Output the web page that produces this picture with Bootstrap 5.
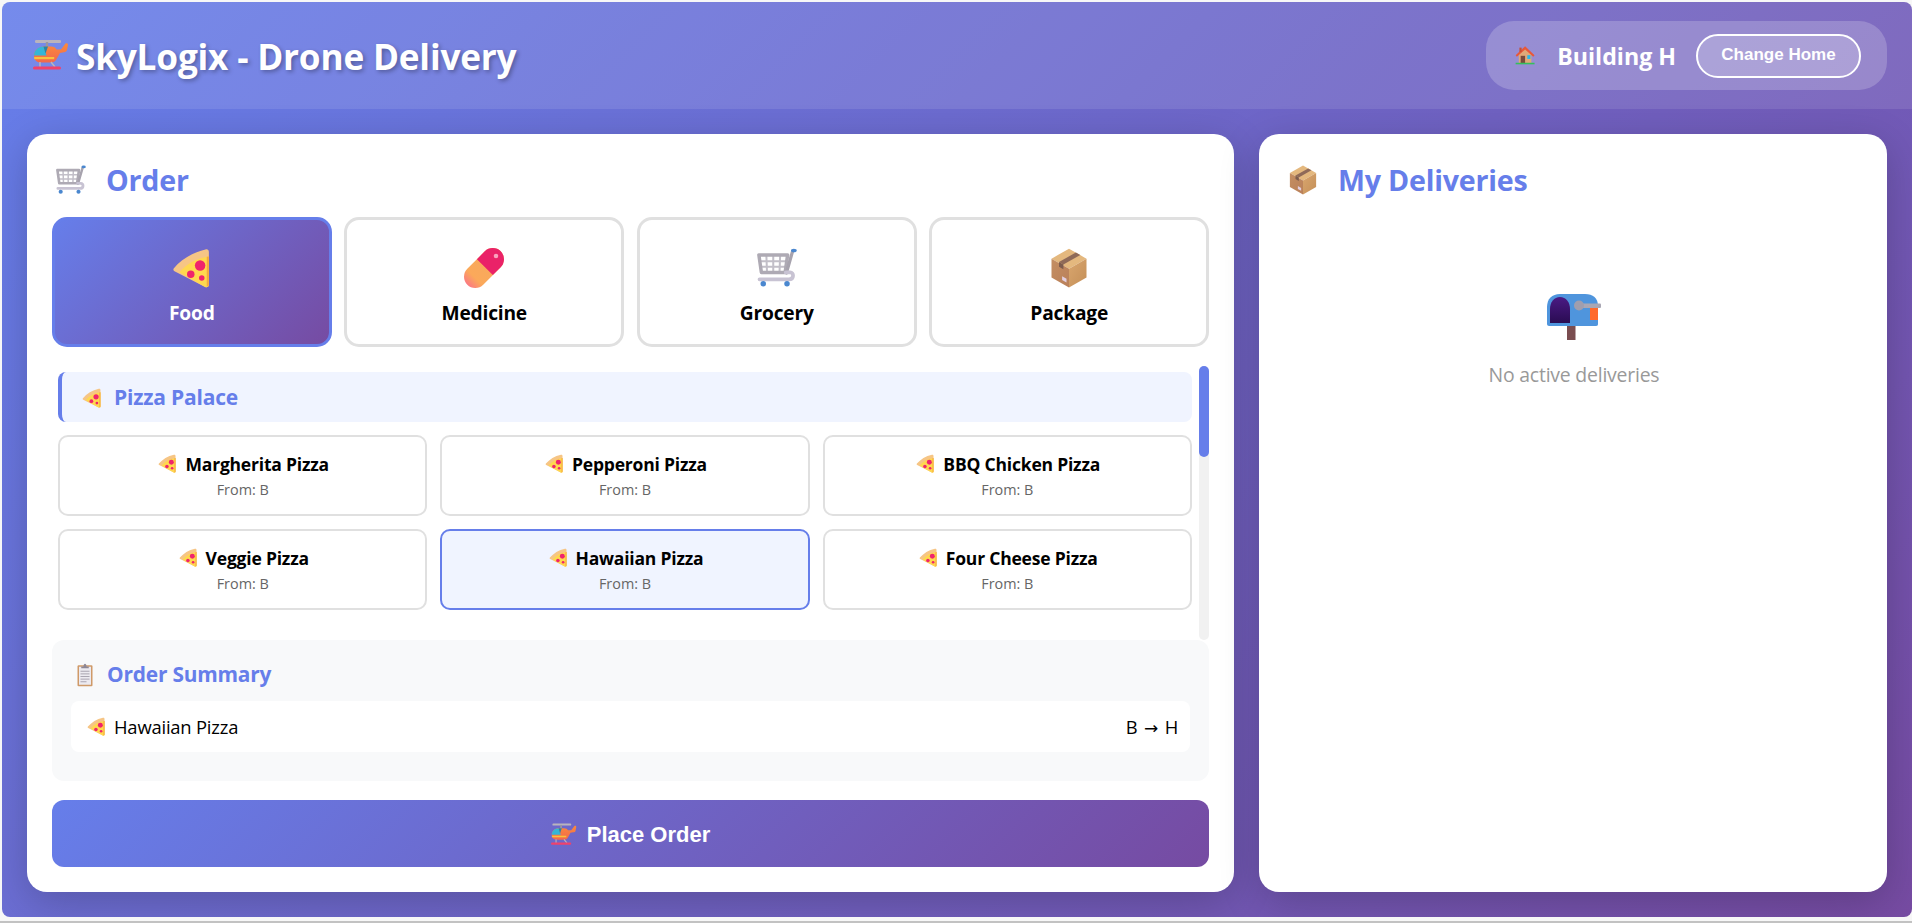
<!DOCTYPE html>
<html lang="en">
<head>
<meta charset="utf-8">
<title>SkyLogix - Drone Delivery</title>
<link href="https://cdn.jsdelivr.net/npm/bootstrap@5.3.0/dist/css/bootstrap.min.css" rel="stylesheet">
<style>
html,body{height:923px;overflow:hidden}
body{background:#f7f7f7;font-family:"Open Sans","Noto Sans",sans-serif;color:#000;padding:2px 0 0 2px;border-bottom:2px solid #c2c2c2}
.sky-app{height:915px;border-radius:8px;overflow:hidden;background:linear-gradient(135deg,#667eea 0%,#764ba2 100%)}
.sky-head{height:107px;padding:0 25px 0 31px;background:rgba(255,255,255,.1);flex:none}
.sky-brand{font-size:35.2px;font-weight:700;color:#fff;text-shadow:2px 2px 4px rgba(0,0,0,.3);letter-spacing:-.2px;gap:7px;padding-top:2px}
.sky-pill{height:69px;width:401px;padding:0 26px 0 29px;background:rgba(255,255,255,.2);border-radius:28px}
.sky-pilltext{font-size:23.2px;font-weight:700;color:#fff;margin:2px 20px 0 22px;white-space:nowrap}
.sky-change{height:44px;width:165px;flex:none;border:2px solid #fff;border-radius:25px;background:rgba(255,255,255,.2);color:#fff;font:700 17px "Liberation Sans",sans-serif;padding:0 0 1px}
.sky-change:hover{background:rgba(255,255,255,.3);color:#fff;border-color:#fff}
.sky-main{flex:1;min-height:0;padding:25px;display:grid;grid-template-columns:1207px 628px;column-gap:25px}
.sky-panel{border:0;border-radius:20px;background:#fff;box-shadow:0 10px 40px rgba(0,0,0,.2);padding:25px;min-height:0}
.sky-panel>*{flex-shrink:0}
.sky-title{font-size:28.6px;font-weight:700;color:#667eea;margin:0 0 16px;height:42px;line-height:42px;letter-spacing:-.2px;gap:20px}
.sky-cats{display:grid;grid-template-columns:repeat(4,1fr);column-gap:12.8px;height:130px}
.sky-cat{border:3px solid #e0e0e0;border-radius:15px;background:#fff;font-size:19.2px;font-weight:700;color:#000;padding:0;letter-spacing:-.2px}
.sky-cat svg{margin-top:28px;margin-bottom:11px}
.sky-cat-on{background:linear-gradient(135deg,#667eea 0%,#764ba2 100%);border-color:#667eea;color:#fff}
.sky-listwrap{height:274px;margin-top:19px}
.sky-list{padding:6px 7px 0 6px}
.sky-rest{height:50px;background:#f0f4ff;border-left:4px solid #667eea;border-radius:8px;padding:1px 0 0 20px;font-size:21px;font-weight:700;color:#667eea;letter-spacing:-.2px;gap:12px;margin-bottom:13px}
.sky-items{display:grid;grid-template-columns:repeat(3,1fr);gap:13px 12.8px}
.sky-item{height:81px;border:2px solid #e0e0e0;border-radius:10px;background:#fff;padding:0}
.sky-item-on{border-color:#667eea;background:#f0f4ff}
.sky-name{font-size:17.5px;font-weight:700;color:#000;gap:8px;line-height:22px;letter-spacing:-.2px;padding-left:2px}
.sky-from{font-size:14.4px;color:#666;line-height:18px;margin-top:6px}
.sky-track{width:10px;background:#f1f1f1;border-radius:5px}
.sky-thumb{height:91px;background:#667eea;border-radius:5px}
.sky-summary{height:141px;background:#f8f9fa;border-radius:12px;padding:20px 19px 0}
.sky-sumtitle{font-size:20.9px;font-weight:700;color:#667eea;gap:13px;height:30px;margin-bottom:11px;padding-left:5px;letter-spacing:-.2px}
.sky-sumrow{height:51px;background:#fff;border-radius:8px;padding:1px 12px 0 16px;font-size:18.4px;letter-spacing:-.2px}
.sky-arrow{font-family:"DejaVu Sans",sans-serif;font-size:17px;margin:0 2px}
.sky-place{width:100%;height:67px;margin-top:19px;border:0;border-radius:12px;background:linear-gradient(135deg,#667eea 0%,#764ba2 100%);color:#fff;font:700 22px "Liberation Sans",sans-serif;gap:10px;padding-top:8px}
.sky-place:hover{color:#fff;background:linear-gradient(135deg,#667eea 0%,#764ba2 100%)}
.sky-empty{padding-top:77px;padding-left:2px}
.sky-emptytext{font-size:19.4px;color:#999;margin-top:22px;line-height:26px;letter-spacing:-.2px}
</style>
</head>
<body>
<svg width="0" height="0" class="position-absolute" aria-hidden="true">
<defs>
<linearGradient id="g-pill" x1="0" y1="0" x2="1" y2="0"><stop offset="0" stop-color="#fb7a82"/><stop offset=".22" stop-color="#fba95a"/><stop offset="1" stop-color="#f5a95f"/></linearGradient>
<linearGradient id="g-box" x1="0" y1="0" x2="1" y2="1"><stop offset="0" stop-color="#c48e62"/><stop offset="1" stop-color="#b9805a"/></linearGradient>
<linearGradient id="g-box2" x1="0" y1="0" x2="1" y2="1"><stop offset="0" stop-color="#d9a66e"/><stop offset="1" stop-color="#c48f58"/></linearGradient>
<linearGradient id="g-mail" x1="0" y1="0" x2="0" y2="1"><stop offset="0" stop-color="#4a1a84"/><stop offset="1" stop-color="#2a0c52"/></linearGradient>
<linearGradient id="g-heli" x1="0" y1="0" x2="0" y2="1"><stop offset="0" stop-color="#fb8a3c"/><stop offset="1" stop-color="#f2684c"/></linearGradient>
<symbol id="i-pizza" viewBox="0 0 32 32">
<path fill="#f6c585" d="M29.500 3.200C29.500 1.600 28.400.8 26.800 1.200 16.500 3.500 7.500 9 1.500 16.200c-.7.9-.5 1.800.5 2.400l24.500 12.500c1.500.7 3 .1 3-1.700z"/>
<path fill="#ffd84f" d="M29.500 6.800C20 8 11.500 12.700 6 19.400l20.500 11.700c1.500.7 3 .1 3-1.700z"/>
<path fill="#f5a93d" d="M27.800 7v23.800c1-.2 1.700-.6 1.700-1.400V6.800z"/>
<circle cx="22.500" cy="14" r="4.200" fill="#f0246c"/>
<circle cx="15" cy="21" r="3" fill="#f0246c"/>
<circle cx="23.800" cy="24" r="2.200" fill="#f0246c"/>
</symbol>
<symbol id="i-pill" viewBox="0 0 32 32">
<g transform="rotate(-45 16 16)">
<rect x="-2.900" y="7" width="37.800" height="18" rx="9" fill="url(#g-pill)"/>
<path fill="#ea2268" d="M17 7h8.900a9 9 0 0 1 0 18H17z"/>
</g>
<circle cx="25.600" cy="6.400" r="1.800" fill="#f9a3bd"/>
</symbol>
<symbol id="i-box" viewBox="0 0 32 32">
<path fill="#e4b87e" d="M16 .5 30 8.500 16 16.500 2 8.500z"/>
<path fill="url(#g-box)" d="M2 8.500 16 16.500V31.500L2 23.500z"/>
<path fill="url(#g-box2)" d="M30 8.500 16 16.500V31.500L30 23.500z"/>
<path fill="#8f6a58" d="M21.500 3.600 25 5.600 11.500 13.200 8 11.200z"/>
<path fill="#7d5c4e" d="M8 11.200 11.500 13.200V17L8 15z"/>
<path fill="#e2cfe0" d="M10.500 22.500 14 24.500V27.500L10.500 25.500z"/>
</symbol>
<symbol id="i-cart" viewBox="0 0 32 32">
<path fill="none" stroke="#c2bfc8" stroke-width="1.600" d="M7.500 6 8 19.500M13 6V19.500M18.500 6 18 19.500M2 10.500H24M3 15H23"/>
<path fill="none" stroke="#aeaab4" stroke-width="2.800" stroke-linejoin="round" d="M1.500 5.500H24.500L22.500 19.500H3.500z"/>
<path fill="none" stroke="#a7a3ae" stroke-width="2.600" stroke-linecap="round" d="M28.500 2.500 23.500 20"/>
<path fill="none" stroke="#c8c3d3" stroke-width="3" stroke-linecap="round" d="M23 19.500h3.500c3 0 3.500 5.500-1 5.500H2"/>
<ellipse cx="29.500" cy="2" rx="2.300" ry="1.400" fill="#4a87cf"/>
<circle cx="5" cy="28.500" r="2.200" fill="#4a87cf"/><circle cx="24" cy="28.500" r="2.200" fill="#4a87cf"/>
</symbol>
<symbol id="i-mail" viewBox="0 0 54 46">
<rect x="20" y="30" width="8.500" height="16" fill="#7a4d50"/>
<path fill="#4f95dd" d="M13 0H38c8 0 13 4 13 12V30c0 1-.5 2-2 2H2c-1 0-2-1-2-2V13C0 5 5 0 13 0z"/>
<path fill="url(#g-mail)" d="M3 29V15C3 8 7 3 13 3s10 5 10 12V29z"/>
<rect x="43" y="14" width="8" height="12" fill="#ff6a2c"/>
<rect x="30" y="9.500" width="24" height="4.500" rx="1" fill="#a9a7b4"/>
<circle cx="32" cy="11.500" r="5" fill="#a09eae"/>
</symbol>
<symbol id="i-house" viewBox="0 0 32 32">
<path fill="#e0a878" d="M6 13 16 5 26 13V28H6z"/>
<path fill="#e8583a" d="M16 1.500 31 15.500 29 18 16 6.500 3 18 1 15.500z"/>
<rect x="7" y="3.500" width="3.500" height="7" fill="#c94f35"/>
<rect x="9" y="16.500" width="7" height="11.500" fill="#7a4a3c"/>
<rect x="19.500" y="15.500" width="5" height="6" fill="#29b6ea"/>
<rect x="1" y="27.500" width="30" height="2.500" fill="#34c05b"/>
</symbol>
<symbol id="i-heli" viewBox="0 0 36 32">
<rect x="2" y="0" width="26" height="3" rx="1.200" fill="#b9b4bd"/>
<rect x="12.800" y="2" width="2.400" height="7" fill="#9a96a0"/>
<path fill="url(#g-heli)" d="M32.500 3.500c1.500-.5 2.500 0 2.500 1.500l-1 5c-.3 1.500-1.500 2-3 2.200l-4 .8-4 7c-1 1.500-2.500 2.500-5 2.500H7c-3 0-6-2.500-6-6.500C1 10 5.500 6.500 11 6.500h7c3 0 4.500 1 5.500 3h4.500z"/>
<path fill="#35b6d6" d="M1 15.500c0-5 4-9 9.500-9l3 9z"/>
<path fill="#2785a8" d="M10.500 6.500h4.500l-2.500 7z"/>
<rect x="1.200" y="17" width="20" height="2.200" fill="#f9c23c"/>
<path stroke="#b9b4bd" stroke-width="1.500" d="M7 22v5M18 22l4 5"/>
<rect x="0" y="26.500" width="28" height="3" rx="1.500" fill="#f0426c"/>
</symbol>
<symbol id="i-clip" viewBox="0 0 24 32">
<rect x="2" y="3" width="20" height="28" rx="1.500" fill="#cf9a68"/>
<rect x="4" y="5" width="16" height="24" fill="#eceaf0"/>
<path stroke="#a8a4b0" stroke-width="1.300" d="M6 11H18M6 14.500H18M6 18H18M6 21.500H18M6 25H14"/>
<path fill="#8d8795" d="M7 7V4.500h3C10 2.500 11 1 12 1s2 1.500 2 3.500h3V7z"/>
</symbol>
</defs>
</svg>

<div class="sky-app d-flex flex-column">
  <header class="sky-head d-flex align-items-center justify-content-between">
    <div class="sky-brand d-flex align-items-center">
      <svg width="36" height="32"><use href="#i-heli"/></svg>
      <span>SkyLogix - Drone Delivery</span>
    </div>
    <div class="sky-pill d-flex align-items-center">
      <svg width="21" height="21"><use href="#i-house"/></svg>
      <span class="sky-pilltext">Building H</span>
      <button type="button" class="btn sky-change">Change Home</button>
    </div>
  </header>

  <main class="sky-main">
    <section class="card sky-panel">
      <h2 class="sky-title d-flex align-items-center">
        <svg width="30" height="30" class="ms-1"><use href="#i-cart"/></svg>Order
      </h2>
      <div class="sky-cats">
        <button type="button" class="btn sky-cat sky-cat-on d-flex flex-column align-items-center"><svg width="40" height="40"><use href="#i-pizza"/></svg>Food</button>
        <button type="button" class="btn sky-cat d-flex flex-column align-items-center"><svg width="40" height="40"><use href="#i-pill"/></svg>Medicine</button>
        <button type="button" class="btn sky-cat d-flex flex-column align-items-center"><svg width="40" height="40"><use href="#i-cart"/></svg>Grocery</button>
        <button type="button" class="btn sky-cat d-flex flex-column align-items-center"><svg width="40" height="40"><use href="#i-box"/></svg>Package</button>
      </div>

      <div class="sky-listwrap d-flex">
        <div class="sky-list flex-grow-1">
          <div class="sky-rest d-flex align-items-center"><svg width="20" height="20"><use href="#i-pizza"/></svg>Pizza Palace</div>
          <div class="sky-items">
            <div class="sky-item text-center d-flex flex-column justify-content-center"><div class="sky-name d-flex justify-content-center align-items-center"><svg width="19" height="19"><use href="#i-pizza"/></svg>Margherita Pizza</div><div class="sky-from">From: B</div></div>
            <div class="sky-item text-center d-flex flex-column justify-content-center"><div class="sky-name d-flex justify-content-center align-items-center"><svg width="19" height="19"><use href="#i-pizza"/></svg>Pepperoni Pizza</div><div class="sky-from">From: B</div></div>
            <div class="sky-item text-center d-flex flex-column justify-content-center"><div class="sky-name d-flex justify-content-center align-items-center"><svg width="19" height="19"><use href="#i-pizza"/></svg>BBQ Chicken Pizza</div><div class="sky-from">From: B</div></div>
            <div class="sky-item text-center d-flex flex-column justify-content-center"><div class="sky-name d-flex justify-content-center align-items-center"><svg width="19" height="19"><use href="#i-pizza"/></svg>Veggie Pizza</div><div class="sky-from">From: B</div></div>
            <div class="sky-item sky-item-on text-center d-flex flex-column justify-content-center"><div class="sky-name d-flex justify-content-center align-items-center"><svg width="19" height="19"><use href="#i-pizza"/></svg>Hawaiian Pizza</div><div class="sky-from">From: B</div></div>
            <div class="sky-item text-center d-flex flex-column justify-content-center"><div class="sky-name d-flex justify-content-center align-items-center"><svg width="19" height="19"><use href="#i-pizza"/></svg>Four Cheese Pizza</div><div class="sky-from">From: B</div></div>
          </div>
        </div>
        <div class="sky-track flex-shrink-0"><div class="sky-thumb"></div></div>
      </div>

      <div class="sky-summary">
        <div class="sky-sumtitle d-flex align-items-center"><svg width="18" height="24"><use href="#i-clip"/></svg>Order Summary</div>
        <div class="sky-sumrow d-flex align-items-center justify-content-between">
          <span class="d-flex align-items-center gap-2"><svg width="19" height="19"><use href="#i-pizza"/></svg>Hawaiian Pizza</span>
          <span>B <span class="sky-arrow">→</span> H</span>
        </div>
      </div>

      <button type="button" class="btn sky-place d-flex align-items-center justify-content-center"><svg width="26" height="24"><use href="#i-heli"/></svg>Place Order</button>
    </section>

    <section class="card sky-panel">
      <h2 class="sky-title d-flex align-items-center">
        <svg width="30" height="30" class="ms-1"><use href="#i-box"/></svg>My Deliveries
      </h2>
      <div class="sky-empty text-center">
        <svg width="54" height="46"><use href="#i-mail"/></svg>
        <div class="sky-emptytext">No active deliveries</div>
      </div>
    </section>
  </main>
</div>
</body>
</html>
